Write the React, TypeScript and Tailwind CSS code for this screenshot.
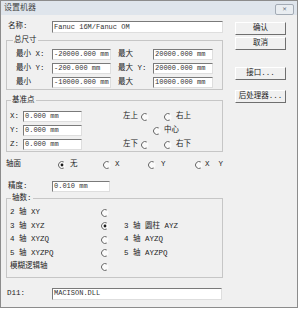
import React from "react";

function Radio({ on = false }: { on?: boolean }) {
  return (
    <svg width="8" height="8" viewBox="0 0 8 8" className="shrink-0">
      <circle cx="4" cy="4" r="3.5" fill="#fafafa" />
      <path d="M5.75 0.97A3.5 3.5 0 1 0 5.75 7.03" stroke="#666" strokeWidth="1" fill="none" />
      {on && <circle cx="4" cy="4" r="1.4" fill="#1a1a1a" />}
    </svg>
  );
}

function Field({ value, className }: { value: string; className: string }) {
  return (
    <div
      className={`flex items-center shrink-0 bg-white border border-t-[#7a7a7a] border-l-[#7a7a7a] border-r-[#dedede] border-b-[#dedede] pl-[1px] text-[7px] leading-none text-[#333] whitespace-pre ${className}`}
    >
      {value}
    </div>
  );
}

function Btn({ label, className }: { label: string; className: string }) {
  return (
    <button
      className={`w-[51px] h-[13px] flex items-center justify-center bg-[#f0f0f0] border border-t-white border-l-white border-r-[#6f6f6f] border-b-[#6f6f6f] text-[7.5px] leading-none text-[#222] ${className}`}
    >
      {label}
    </button>
  );
}

const sizes = [
  ["最小 X:", "-20000.000 mm", "最大", "20000.000 mm"],
  ["最小 Y:", "-200.000 mm", "最大 Y:", "20000.000 mm"],
  ["最小", "-10000.000 mm", "最大", "10000.000 mm"],
];

const axes = [
  ["2 轴 XY", false, ""],
  ["3 轴 XYZ", true, "3 轴 圆柱 AYZ"],
  ["4 轴 XYZQ", false, "4 轴 AYZQ"],
  ["5 轴 XYZPQ", false, "5 轴 AYZPQ"],
  ["模糊逻辑轴", false, ""],
] as const;

export default function App() {
  return (
    <div className="w-[300px] h-[310px] bg-white font-['Liberation_Mono','Noto_Sans_CJK_SC',monospace] text-[#222]">
      <div className="w-[298px] h-[308px] border border-[#8c8c8c] bg-[#f0f0f0] flex flex-col">
        {/* title bar */}
        <div className="h-[14px] shrink-0 bg-[#dfe5ec] flex items-center justify-between pl-[3px] pr-[3px]">
          <span className="text-[8px] leading-none text-[#444]">设置机器</span>
          <div className="w-[19px] h-[11px] mt-[3px] rounded-[2px] border border-[#a3abb5] bg-[#e9edf1] flex items-center justify-center text-[7px] leading-none text-[#6a7480]">
            ✕
          </div>
        </div>

        <div className="flex">
          {/* left column */}
          <div className="w-[222px] pl-[5px] flex flex-col text-[7.5px] leading-none">
            <div className="mt-[6px] h-[12px] flex items-center">
              <span className="ml-[2px] w-[44px]">名称:</span>
              <Field value="Fanuc 16M/Fanuc OM" className="w-[171px] h-[12px]" />
            </div>

            <fieldset className="mt-[3px] w-[217px] border border-[#c6c6c6] pl-[9px] pb-[1px]">
              <legend className="ml-[-3px] px-[1px] leading-[9px]">总尺寸</legend>
              <div className="pt-[4px] flex flex-col gap-[3px]">
                {sizes.map((r) => (
                  <div key={r[0] + r[1]} className="h-[11px] flex items-center">
                    <span className="w-[36px]">{r[0]}</span>
                    <Field value={r[1]} className="w-[59px] h-[11px]" />
                    <span className="ml-[7px] w-[35px]">{r[2]}</span>
                    <Field value={r[3]} className="w-[60px] h-[11px]" />
                  </div>
                ))}
              </div>
            </fieldset>

            <fieldset className="mt-[6px] w-[217px] border border-[#c6c6c6] pl-[3px] pb-[1px]">
              <legend className="ml-[1px] px-[1px] leading-[9px]">基准点</legend>
              <div className="pt-[6px] flex flex-col gap-[3px]">
                <div className="h-[11px] flex items-center">
                  <span className="w-[13px]">X:</span>
                  <Field value="0.000 mm" className="w-[59px] h-[11px]" />
                  <span className="ml-[41px] w-[18px]">左上</span>
                  <Radio />
                  <span className="ml-[15px]">
                    <Radio />
                  </span>
                  <span className="ml-[4px]">右上</span>
                </div>
                <div className="h-[11px] flex items-center">
                  <span className="w-[13px]">Y:</span>
                  <Field value="0.000 mm" className="w-[59px] h-[11px]" />
                  <span className="ml-[71px]">
                    <Radio />
                  </span>
                  <span className="ml-[3px]">中心</span>
                </div>
                <div className="h-[11px] flex items-center">
                  <span className="w-[13px]">Z:</span>
                  <Field value="0.000 mm" className="w-[59px] h-[11px]" />
                  <span className="ml-[41px] w-[18px]">左下</span>
                  <Radio />
                  <span className="ml-[15px]">
                    <Radio />
                  </span>
                  <span className="ml-[4px]">右下</span>
                </div>
              </div>
            </fieldset>

            <div className="mt-[8px] h-[10px] flex items-center">
              <span className="w-[52px]">轴面</span>
              <div className="w-[45px] flex items-center gap-[4px]">
                <Radio on />
                <span>无</span>
              </div>
              <div className="w-[45px] flex items-center gap-[4px]">
                <Radio />
                <span>X</span>
              </div>
              <div className="w-[47px] flex items-center gap-[5px]">
                <Radio />
                <span>Y</span>
              </div>
              <div className="flex items-center gap-[2px]">
                <Radio />
                <span className="whitespace-pre">X  Y</span>
              </div>
            </div>

            <div className="mt-[11px] h-[11px] flex items-center">
              <span className="ml-[2px] w-[44px]">精度:</span>
              <Field value="0.010 mm" className="w-[58px] h-[11px]" />
            </div>

            <fieldset className="mt-[2px] w-[217px] border border-[#c6c6c6] pl-[3px] pb-[3px]">
              <legend className="ml-[1px] px-[1px] leading-[9px]">轴数:</legend>
              <div className="pt-[3px] flex flex-col">
                {axes.map(([a, on, b]) => (
                  <div key={a} className="h-[13.5px] flex items-center">
                    <span className="w-[91px] whitespace-pre">{a}</span>
                    <Radio on={on} />
                    <span className="ml-[15px] whitespace-pre">{b}</span>
                  </div>
                ))}
              </div>
            </fieldset>

            <div className="mt-[10px] h-[12px] flex items-center">
              <span className="ml-[1px] w-[45px]">D11:</span>
              <Field value="MACISON.DLL" className="w-[170px] h-[12px]" />
            </div>
          </div>

          {/* right column */}
          <div className="ml-[12px] flex flex-col">
            <Btn label="确认" className="mt-[7px]" />
            <Btn label="取消" className="mt-[2px]" />
            <Btn label="接口..." className="mt-[17px]" />
            <Btn label="后处理器..." className="mt-[10px]" />
          </div>
        </div>
      </div>
    </div>
  );
}
